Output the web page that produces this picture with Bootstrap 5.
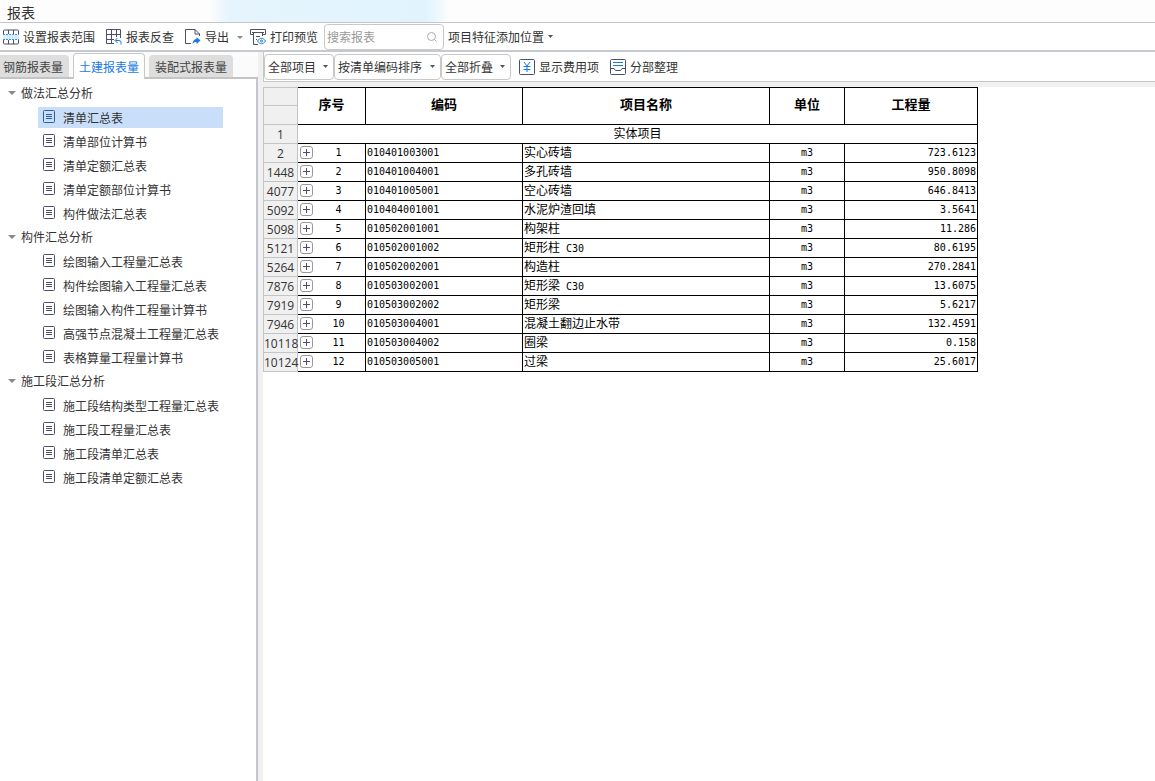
<!DOCTYPE html>
<html lang="zh-CN">
<head>
<meta charset="utf-8">
<meta name="viewport" content="width=device-width, initial-scale=1">
<title>报表</title>
<link href="https://cdn.jsdelivr.net/npm/bootstrap@5.3.0/dist/css/bootstrap.min.css" rel="stylesheet">
<style>
  :root { --rule: #c3c6cd; --pane: #f0f0f0; --ink: #333; --blue: #1a7ae0; }
  body { font: 12px/18px "Noto Sans CJK SC", sans-serif; color: var(--ink); background: #fff; }
  svg { flex: none; fill: none; stroke: #4a5068; }
  .titlebar { height: 23px; padding: 2px 7px 0; border-bottom: 1px solid var(--rule); background: linear-gradient(90deg, #fdfdfd 18%, #e5f4fd 20%, #e1f4fe 37%, #fdfdfd 39%); }
  .titlebar h1 { font-size: 14px; line-height: 20px; font-weight: 400; }
  .topbar { height: 29px; padding-left: 3px; border-bottom: 2px solid #c6c9cd; }
  .tool { border: 0; background: none; padding: 0; color: inherit; display: flex; align-items: center; gap: 4px; white-space: nowrap; line-height: 18px; padding-top: 1px; }
  .tool + .tool { margin-left: 11px; }
  .tool.with-menu + .tool { margin-left: 7px; }
  .tool:hover { color: var(--blue); }
  .caret-down { border: 3px solid transparent; border-top-color: #888; border-bottom: 0; }
  .search { width: 120px; height: 26px; margin-left: 6px; border: 1px solid #c8c8c8; border-radius: 4px; padding: 0 5px 0 2px; }
  .search input { border: 0; outline: 0; padding: 0; min-width: 0; background: none; line-height: 18px; }
  .search input::placeholder { color: #999; opacity: 1; }
  .search svg { stroke: #aaa; }
  .pick { appearance: none; height: 26px; padding: 0 3px; border: 1px solid #c8c8c8; border-radius: 4px; color: inherit; background: #fff url("data:image/svg+xml,%3Csvg xmlns='http://www.w3.org/2000/svg' width='5' height='3'%3E%3Cpath d='M0 0h5L2.5 3z' fill='%23505560'/%3E%3C/svg%3E") no-repeat right 5px center; }
  .pick.plain { border-color: transparent; background-color: transparent; }
  .pick-sm { width: 70px; } .pick-md { width: 107px; } .pick-lg { width: 115px; }
  .sidebox { width: 258px; flex: none; }
  .report-tabs { height: 27px; background: #fbfbfb; border-bottom: 2px solid #c4c4c4; padding-top: 1px; }
  .report-tabs button { border: 1px solid #ddd; border-bottom: 0; border-radius: 4px 4px 0 0; background: #dedede; color: #444; padding: 0 5px; height: 22px; white-space: nowrap; }
  .report-tabs button:first-child { border-left: 0; border-radius: 0 4px 0 0; padding-left: 3px; }
  .report-tabs button.active { background: #fff; border-color: #c8c8c8; color: var(--blue); height: 26px; margin-bottom: -2px; }
  .tree { border-right: 2px solid var(--rule); padding-top: 2px; flex: 1; }
  .tree summary { height: 24px; padding-left: 8px; gap: 5px; display: flex; align-items: center; list-style: none; }
  .tree summary .caret-down { border-width: 4px; border-bottom: 0; }
  .tree a { display: flex; align-items: center; gap: 8px; height: 21px; margin: 2px 33px 3px 38px; padding-left: 5px; color: inherit; text-decoration: none; white-space: nowrap; }
  .tree details { display: flow-root; }
  .tree summary + a { margin-top: 2px; }
  .tree a + a { margin-top: 0; }
  .tree a:last-child { margin-bottom: 1px; }
  .tree a.active { background: #c9dff9; }
  .tree a.active svg { stroke: #2c5f9c; }
  .tree svg { margin-bottom: 2px; }
  .work { border-left: 5px solid var(--pane); min-width: 0; }
  .subbar { height: 30px; border: 1px solid #c4c8c8; border-width: 0 0 1px 1px; }
  .sheetwrap { border-top: 5px solid var(--pane); }
  .sheet { table-layout: fixed; width: 715px; border-collapse: separate; border-spacing: 0; color: #000; }
  .sheet th, .sheet td { height: 19px; padding: 0 1px; line-height: 16px; border: 0 solid #000; border-width: 0 1px 1px 0; overflow: hidden; white-space: nowrap; vertical-align: top; }
  .sheet thead th { border-top-width: 1px; vertical-align: middle; text-align: center; padding-bottom: 4px; font-size: 13px; }
  .sheet tr > th.idx { border-color: #c4c4c4; border-left-width: 1px; background: var(--pane); padding: 1px 0 0; font: 12px/17px "Open Sans", sans-serif; color: var(--ink); text-align: center; overflow: visible; }
  .sheet thead tr + tr .idx { border-top-width: 0; }
  .sheet .num { font: 10px/18px "DejaVu Sans Mono", monospace; }
  .sheet .spec { line-height: 10px; white-space: pre; }
  .plus { width: 13px; height: 13px; margin: 2px 0 0 1px; border: 1px solid #999; border-radius: 3px; background: #fff; padding: 0; display: grid; place-items: center; }
  .seq { flex: 1; text-align: center; }
</style>
</head>
<body class="d-flex flex-column min-vh-100">
<header>
  <div class="titlebar"><h1 class="m-0">报表</h1></div>
  <div class="topbar d-flex align-items-center">
    <button class="tool" type="button"><svg width="16" height="16"><path fill="#d9ecff" stroke="none" d="M0 6h16v4H0z"/><path d="M.5 5V2q0-1 1-1h13q1 0 1 1v3M.5 11v3q0 1 1 1h13q1 0 1-1v-3M5.500 1v4M10.500 1v4M5.500 11v4M10.500 11v4"/><path stroke="#3d8fe8" stroke-dasharray="2 1" d="M0 5.500h16M0 10.500h16"/></svg>设置报表范围</button>
    <button class="tool" type="button"><svg width="16" height="16"><path d="M8 14.500H.5V.5h14V9M5.500.5v14M10.500.5V8M.5 5.500h14M.5 10.500H8"/><path stroke="#1a7ae0" d="M15 15.500v-2q0-2-2-2H9.500M11.500 9l-2.500 2.500 2.500 2.500"/></svg>报表反查</button>
    <button class="tool with-menu" type="button"><svg width="16" height="16"><path d="M6 14.500H.5V.5H10L14.500 5v2M10 .5V5h4.500"/><path fill="#1a7ae0" stroke="none" d="M7.500 15c0-3 2-5 4-5V8l4 3.500-4 3.500v-2c-2 0-3 .5-4 2z"/></svg>导出<span class="caret-down ms-1"></span></button>
    <button class="tool" type="button"><svg width="16" height="16"><path d="M3 5.500H.5v-5h15v5H13M3.500 3v12.500H8M12.500 3v4M2 3.500h12M6 7.500h4M6 10.500h1"/><path stroke="#1a7ae0" d="M7.500 12c2-3.500 6-3.500 8 0-2 3.500-6 3.500-8 0z"/><circle stroke="#1a7ae0" cx="11.500" cy="12" r="1"/></svg>打印预览</button>
    <div class="search d-flex align-items-center"><input class="flex-fill" type="search" placeholder="搜索报表" aria-label="搜索报表"><svg width="12" height="12"><circle cx="5.500" cy="5.500" r="4"/><path d="M8.500 8.500l2 2"/></svg></div>
    <select class="pick plain pick-lg" aria-label="项目特征添加位置"><option>项目特征添加位置</option></select>
  </div>
</header>
<div class="d-flex flex-fill">
  <aside class="sidebox d-flex flex-column">
    <div class="report-tabs d-flex align-items-end gap-1" role="tablist">
      <button type="button" role="tab">钢筋报表量</button>
      <button type="button" role="tab" class="active" aria-selected="true">土建报表量</button>
      <button type="button" role="tab">装配式报表量</button>
    </div>
    <nav class="tree" id="tree"></nav>
  </aside>
  <main class="work flex-fill">
    <div class="subbar d-flex align-items-center">
      <select class="pick pick-sm" aria-label="项目范围"><option>全部项目</option></select>
      <select class="pick pick-md" aria-label="排序"><option>按清单编码排序</option></select>
      <select class="pick pick-sm me-1" aria-label="折叠"><option>全部折叠</option></select>
      <button class="tool ps-1" type="button"><svg width="16" height="16"><rect x=".5" y=".5" width="15" height="15" rx="1"/><path stroke="#1a7ae0" d="M5 3l3 4 3-4M8 7v6M4.500 7.500h7M4.500 10.500h7"/></svg>显示费用项</button>
      <button class="tool" type="button"><svg width="16" height="16"><rect x=".5" y=".5" width="15" height="15" rx="1"/><path d="M.5 9.500H4l1.500 2h5l1.500-2h3.500"/><path stroke="#1a7ae0" d="M3 3.500h10M3 6.500h10"/></svg>分部整理</button>
    </div>
    <div class="sheetwrap">
      <table class="sheet">
        <colgroup><col style="width:35px"><col style="width:68px"><col style="width:157px"><col style="width:247px"><col style="width:75px"><col style="width:133px"></colgroup>
        <thead>
          <tr><th class="idx"></th><th rowspan="2">序号</th><th rowspan="2">编码</th><th rowspan="2">项目名称</th><th rowspan="2">单位</th><th rowspan="2">工程量</th></tr>
          <tr><th class="idx"></th></tr>
        </thead>
        <tbody id="rows"><tr><th class="idx">1</th><td colspan="5" class="text-center">实体项目</td></tr></tbody>
      </table>
    </div>
  </main>
</div>
<script src="https://cdn.jsdelivr.net/npm/bootstrap@5.3.0/dist/js/bootstrap.bundle.min.js"></script>
<script>
  const groups = [
    ['做法汇总分析', ['清单汇总表', '清单部位计算书', '清单定额汇总表', '清单定额部位计算书', '构件做法汇总表']],
    ['构件汇总分析', ['绘图输入工程量汇总表', '构件绘图输入工程量汇总表', '绘图输入构件工程量计算书', '高强节点混凝土工程量汇总表', '表格算量工程量计算书']],
    ['施工段汇总分析', ['施工段结构类型工程量汇总表', '施工段工程量汇总表', '施工段清单汇总表', '施工段清单定额汇总表']]
  ];
  const page = '<svg width="12" height="13"><rect x=".5" y=".5" width="11" height="12" rx="1"/><path d="M3 4.500h6M3 6.500h6M3 8.500h6"/></svg>';
  document.getElementById('tree').innerHTML = groups.map(([name, items], g) =>
    `<details open><summary><span class="caret-down"></span>${name}</summary>${items.map((t, i) =>
      `<a href="#"${g + i === 0 ? ' class="active"' : ''}>${page}${t}</a>`).join('')}</details>`).join('');
  const rows = [
    [2, '010401003001', '实心砖墙', '723.6123'], [1448, '010401004001', '多孔砖墙', '950.8098'],
    [4077, '010401005001', '空心砖墙', '646.8413'], [5092, '010404001001', '水泥炉渣回填', '3.5641'],
    [5098, '010502001001', '构架柱', '11.286'], [5121, '010502001002', '矩形柱 C30', '80.6195'],
    [5264, '010502002001', '构造柱', '270.2841'], [7876, '010503002001', '矩形梁 C30', '13.6075'],
    [7919, '010503002002', '矩形梁', '5.6217'], [7946, '010503004001', '混凝土翻边止水带', '132.4591'],
    [10118, '010503004002', '圈梁', '0.158'], [10124, '010503005001', '过梁', '25.6017']
  ];
  document.getElementById('rows').insertAdjacentHTML('beforeend', rows.map(([n, code, name, qty], i) =>
    `<tr><th class="idx">${n}</th><td><div class="d-flex align-items-start"><button class="plus" type="button" aria-label="展开"><svg width="7" height="7"><path d="M0 3.500h7M3.500 0v7"/></svg></button><span class="seq num">${i + 1}</span></div></td>` +
    `<td class="num">${code}</td><td>${name.replace(' C30', '<span class="num spec"> C30</span>')}</td><td class="num text-center">m3</td><td class="num text-end">${qty}</td></tr>`).join(''));
</script>
</body>
</html>
